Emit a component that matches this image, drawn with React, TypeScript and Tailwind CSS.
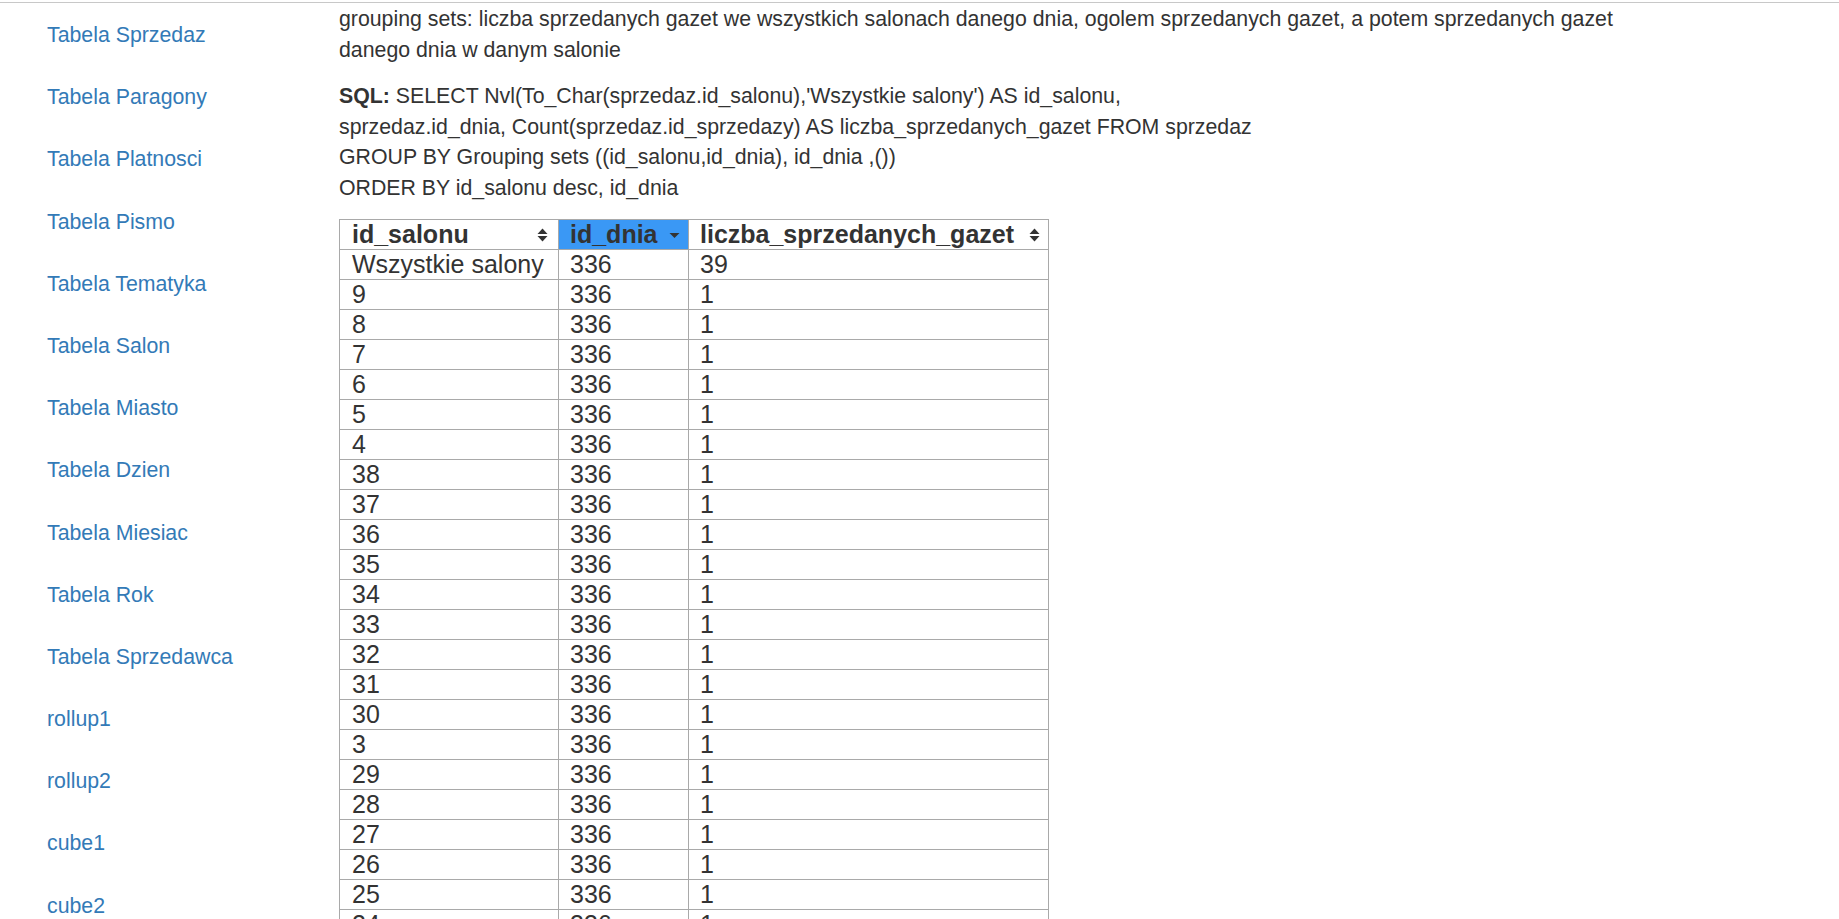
const links = [
  'Tabela Sprzedaz',
  'Tabela Paragony',
  'Tabela Platnosci',
  'Tabela Pismo',
  'Tabela Tematyka',
  'Tabela Salon',
  'Tabela Miasto',
  'Tabela Dzien',
  'Tabela Miesiac',
  'Tabela Rok',
  'Tabela Sprzedawca',
  'rollup1',
  'rollup2',
  'cube1',
  'cube2',
];

const salony = [
  '9', '8', '7', '6', '5', '4', '38', '37', '36', '35', '34', '33', '32', '31', '30', '3',
  '29', '28', '27', '26', '25', '24', '23', '22', '21', '20', '2', '19', '18', '17', '16',
  '15', '14', '13', '12', '11', '10', '1',
];

const rows = [
  { salon: 'Wszystkie salony', dzien: '336', liczba: '39' },
  ...salony.map((s) => ({ salon: s, dzien: '336', liczba: '1' })),
];

function SortBoth() {
  return (
    <svg width="11" height="16" viewBox="0 0 11 16" className="shrink-0">
      <path d="M5.5 1.5 L10.5 7 L0.5 7 Z" fill="#333" />
      <path d="M5.5 14.5 L10.5 9 L0.5 9 Z" fill="#333" />
    </svg>
  );
}

function SortDesc() {
  return (
    <svg width="11" height="16" viewBox="0 0 11 16" className="shrink-0">
      <path d="M0.5 6 L10.5 6 L5.5 11 Z" fill="#333" />
    </svg>
  );
}

export default function App() {
  return (
    <div className="min-h-screen bg-white text-[#333] font-['Liberation_Sans',Arial,sans-serif]">
      <div className="h-[3px] border-b border-[#c8c8c8]" />

      <div className="flex">
        <aside className="w-[339px] shrink-0 pl-[47px] pt-[17px]">
          <ul>
            {links.map((l) => (
              <li key={l} className="h-[62.2px]">
                <a href="#" className="text-[21.3px] leading-[30.4px] text-[#337ab7]">
                  {l}
                </a>
              </li>
            ))}
          </ul>
        </aside>

        <main className="w-[1310px] pt-[1px] text-[21.3px] leading-[30.5px]">
          <p className="mb-[16px]">
            grouping sets: liczba sprzedanych gazet we wszystkich salonach danego dnia, ogolem sprzedanych gazet, a potem
            sprzedanych gazet danego dnia w danym salonie
          </p>
          <p className="mb-[16px]">
            <b>SQL:</b> SELECT Nvl(To_Char(sprzedaz.id_salonu),'Wszystkie salony') AS id_salonu,
            <br />
            sprzedaz.id_dnia, Count(sprzedaz.id_sprzedazy) AS liczba_sprzedanych_gazet FROM sprzedaz
            <br />
            GROUP BY Grouping sets ((id_salonu,id_dnia), id_dnia ,())
            <br />
            ORDER BY id_salonu desc, id_dnia
          </p>

          <table className="table-fixed border-collapse border border-[#a9a9a9] text-[25px] leading-[29px] w-[710px]">
            <colgroup>
              <col className="w-[219px]" />
              <col className="w-[130px]" />
              <col className="w-[360px]" />
            </colgroup>
            <thead>
              <tr>
                <th className="border border-[#a9a9a9] p-0 pl-[12px] pr-[10px] text-left font-bold">
                  <div className="flex items-center justify-between">
                    <span>id_salonu</span>
                    <SortBoth />
                  </div>
                </th>
                <th className="border border-[#a9a9a9] bg-[#3a98f5] p-0 pl-[11px] pr-[8px] text-left font-bold">
                  <div className="flex items-center justify-between">
                    <span>id_dnia</span>
                    <SortDesc />
                  </div>
                </th>
                <th className="border border-[#a9a9a9] p-0 pl-[11px] pr-[8px] text-left font-bold">
                  <div className="flex items-center justify-between">
                    <span>liczba_sprzedanych_gazet</span>
                    <SortBoth />
                  </div>
                </th>
              </tr>
            </thead>
            <tbody>
              {rows.map((r, i) => (
                <tr key={i}>
                  <td className="border border-[#a9a9a9] p-0 pl-[12px] whitespace-nowrap">{r.salon}</td>
                  <td className="border border-[#a9a9a9] p-0 pl-[11px]">{r.dzien}</td>
                  <td className="border border-[#a9a9a9] p-0 pl-[11px]">{r.liczba}</td>
                </tr>
              ))}
            </tbody>
          </table>
        </main>
      </div>
    </div>
  );
}
